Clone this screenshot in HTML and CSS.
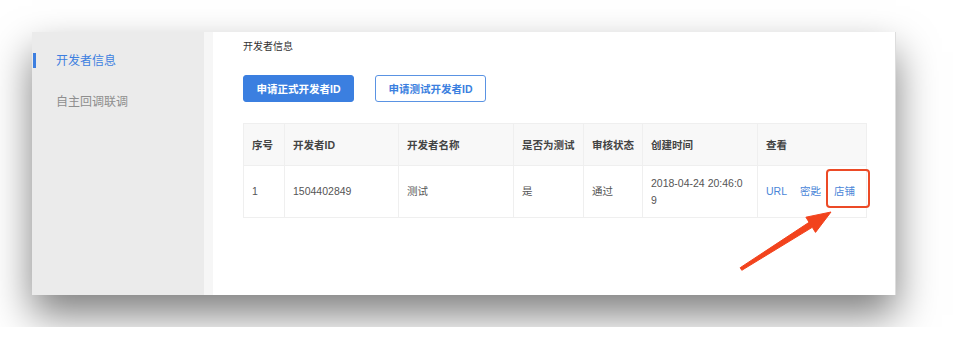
FILE: index.html
```html
<!DOCTYPE html>
<html lang="zh">
<head>
    <meta charset="UTF-8">
    <meta name="viewport" content="width=device-width, initial-scale=1.0">
    <title>开发者信息</title>
    <link rel="stylesheet" href="styles.css">
</head>
<body>
    <div class="window">
        <div class="sidebar">
            <div class="menu-item active">开发者信息</div>
            <div class="menu-item">自主回调联调</div>
        </div>
        <div class="divider"></div>
        <div class="main">
            <div class="title">开发者信息</div>

            <div class="actions">
                <button class="button primary">申请正式开发者ID</button>
                <button class="button outline">申请测试开发者ID</button>
            </div>

            <table class="dev-table">
                <thead>
                    <tr>
                        <th class="c-no">序号</th>
                        <th class="c-id">开发者ID</th>
                        <th class="c-name">开发者名称</th>
                        <th class="c-test">是否为测试</th>
                        <th class="c-state">审核状态</th>
                        <th class="c-time">创建时间</th>
                        <th class="c-view">查看</th>
                    </tr>
                </thead>
                <tbody>
                    <tr>
                        <td>1</td>
                        <td>1504402849</td>
                        <td>测试</td>
                        <td>是</td>
                        <td>通过</td>
                        <td class="time">2018-04-24 20:46:09</td>
                        <td>
                            <div class="links">
                                <a href="#">URL</a>
                                <a href="#">密匙</a>
                                <a href="#">店铺</a>
                            </div>
                        </td>
                    </tr>
                </tbody>
            </table>
        </div>
    </div>

    <!-- 标注: 红框和箭头 -->
    <svg class="annotation" width="962" height="361" viewBox="0 0 962 361">
        <rect x="827" y="170" width="42" height="37" rx="3" fill="none" stroke="#ec4a26" stroke-width="2"/>
        <polygon points="741.8,270.3 812.3,227.3 815.5,232.4 831,212 805.9,217.2 809.1,222.3 740.2,267.7" fill="#f2431d" stroke="#f2431d" stroke-width="1" stroke-linejoin="round"/>
    </svg>
</body>
</html>
```

FILE: styles.css
```css
body {
    margin: 0;
    padding: 32px;
    background: #ffffff;
    font-family: 'Liberation Sans', 'Noto Sans CJK SC', sans-serif;
    color: #333;
}

.window {
    display: flex;
    width: 864px;
    height: 263px;
    background: #fff;
    overflow: hidden;
    box-shadow: 0 20px 38px rgba(0, 0, 0, 0.5);
    border-right: 1px solid #ddd;
    box-sizing: border-box;
}

.sidebar {
    width: 172px;
    flex-shrink: 0;
    background: #ebebeb;
    padding-top: 9px;
    box-sizing: border-box;
}

.menu-item {
    position: relative;
    height: 41px;
    line-height: 41px;
    padding-left: 24px;
    font-size: 12px;
    color: #8e8e8e;
}

.menu-item.active {
    color: #3d7fe0;
}

.menu-item.active::before {
    content: "";
    position: absolute;
    left: 1px;
    top: 12px;
    width: 3px;
    height: 15px;
    background: #3d7fe0;
}

.divider {
    width: 9px;
    flex-shrink: 0;
    background: #f6f6f6;
}

.main {
    flex: 1;
    padding: 7px 29px 0 30px;
}

.title {
    font-size: 10px;
    line-height: 16px;
    color: #333;
}

.actions {
    display: flex;
    gap: 21px;
    margin-top: 20px;
}

.button {
    width: 111px;
    height: 27px;
    border-radius: 3px;
    font-family: 'Liberation Sans', 'Noto Sans CJK SC', sans-serif;
    font-size: 10.5px;
    font-weight: bold;
    cursor: pointer;
    padding: 0;
}

.button.primary {
    background: #3b7fe0;
    border: 1px solid #3b7fe0;
    color: #fff;
}

.button.outline {
    background: #fff;
    border: 1px solid #5a93e3;
    color: #3b7fe0;
}

.dev-table {
    margin-top: 21px;
    border-collapse: collapse;
    width: 623px;
    table-layout: fixed;
    font-size: 10.5px;
}

.dev-table th,
.dev-table td {
    box-sizing: border-box;
    border: 1px solid #efefef;
    text-align: left;
    vertical-align: middle;
    padding: 0 4px 0 8px;
}

.dev-table th {
    height: 42px;
    background: #f8f8f8;
    font-weight: bold;
    color: #444;
}

.dev-table td {
    height: 52px;
    color: #555;
    line-height: 17px;
}

.c-no { width: 41px; }
.c-id { width: 114px; }
.c-name { width: 115px; }
.c-test { width: 70px; }
.c-state { width: 59px; }
.c-time { width: 115px; }
.c-view { width: 109px; }

.dev-table td.time {
    padding-right: 13px;
    word-break: break-all;
}

.links {
    display: flex;
    gap: 13px;
}

.links a {
    color: #4a86d8;
    text-decoration: none;
}

.annotation {
    position: absolute;
    left: 0;
    top: 0;
    pointer-events: none;
}
```
